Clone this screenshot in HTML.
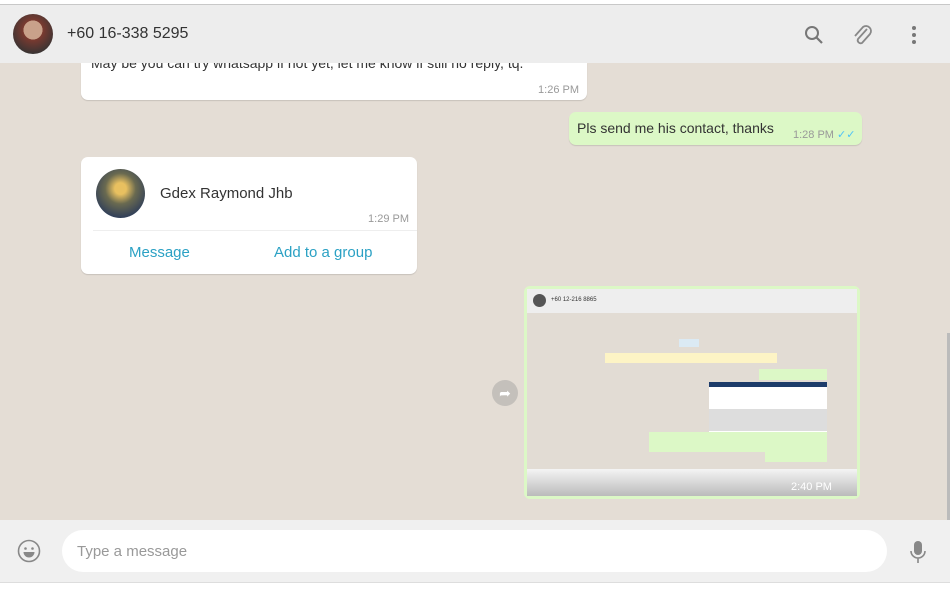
<!DOCTYPE html>
<html><head><style>
*{margin:0;padding:0;box-sizing:border-box}
body{width:950px;height:593px;overflow:hidden;background:#fff;font-family:"Liberation Sans",sans-serif;position:relative}
.chat{position:absolute;left:0;top:63px;width:950px;height:457px;background:#e4ddd5}
.hdr{position:absolute;left:0;top:4px;width:950px;height:59px;background:#ededed;border-top:1px solid #c8c8c8;z-index:2}
.b{position:absolute;background:#fff;border-radius:7px;box-shadow:0 1px 1px rgba(0,0,0,.13);overflow:hidden}
.g{background:#dcf8c6}
.t{position:absolute;font-size:11px;color:#999}
.foot{position:absolute;left:0;top:520px;width:950px;height:62px;background:#f0f0f0}
</style></head><body>
<div class="chat">
 <div style="position:absolute;right:0;top:270px;width:3px;height:190px;background:#bbb"></div>
</div>
<div class="hdr">
 <div style="position:absolute;left:13px;top:9px;width:40px;height:40px;border-radius:50%;background:radial-gradient(circle at 50% 40%,#c9a18a 0 30%,#7a3a30 31%,#333 80%)"></div>
 <div style="position:absolute;left:67px;top:20px;font-size:16px;color:#333">+60 16-338 5295</div>
 <svg style="position:absolute;left:804px;top:20px" width="20" height="20" viewBox="0 0 20 20"><circle cx="8" cy="8" r="6" fill="none" stroke="#777" stroke-width="2"/><line x1="12.5" y1="12.5" x2="18" y2="18" stroke="#777" stroke-width="2.2"/></svg>
 <svg style="position:absolute;left:852px;top:19px" width="22" height="24" viewBox="0 0 22 24"><path d="M15 5 L6 15 a3 3 0 0 0 4 4 L18 10 a5 5 0 0 0 -7 -7 L3 12" fill="none" stroke="#888" stroke-width="1.8"/></svg>
 <div style="position:absolute;left:912px;top:21px;width:4px;height:4px;border-radius:50%;background:#777;box-shadow:0 7px 0 #777,0 14px 0 #777"></div>
</div>
<div class="b" style="left:81px;top:63px;width:506px;height:37px;border-radius:0 0 7px 7px">
 <div style="position:absolute;left:10px;top:-8px;font-size:14px;color:#333">May be you can try whatsapp if not yet, let me know if still no reply, tq.</div>
 <div class="t" style="right:8px;top:21px">1:26 PM</div>
</div>
<div class="b g" style="left:569px;top:112px;width:293px;height:33px">
 <div style="position:absolute;left:8px;top:8px;font-size:14px;color:#333">Pls send me his contact, thanks</div>
 <div class="t" style="left:224px;top:16px">1:28 PM <span style="color:#4fc3f7">✓✓</span></div>
</div>
<div class="b" style="left:81px;top:157px;width:336px;height:117px">
 <div style="position:absolute;left:15px;top:12px;width:49px;height:49px;border-radius:50%;background:radial-gradient(circle at 50% 40%,#e8c060 0 15%,#6a6a50 40%,#2a3a5a 80%)"></div>
 <div style="position:absolute;left:79px;top:28px;font-size:15px;color:#333">Gdex Raymond Jhb</div>
 <div class="t" style="right:8px;top:56px">1:29 PM</div>
 <div style="position:absolute;left:12px;right:0;top:73px;border-top:1px solid #eee"></div>
 <div style="position:absolute;left:48px;top:87px;font-size:15px;color:#2ba1c4">Message</div>
 <div style="position:absolute;left:193px;top:87px;font-size:15px;color:#2ba1c4">Add to a group</div>
</div>
<div style="position:absolute;left:492px;top:380px;width:26px;height:26px;border-radius:50%;background:#c4c0bb;color:#fff;font-size:14px;text-align:center;line-height:26px">➦</div>
<div style="position:absolute;left:524px;top:286px;width:336px;height:213px;background:#dcf8c6;border-radius:6px;padding:3px">
 <div style="position:relative;width:330px;height:207px;background:#e2dcd4;overflow:hidden">
  <div style="position:absolute;left:0;top:0;width:330px;height:24px;background:#eee"></div>
  <div style="position:absolute;left:6px;top:5px;width:13px;height:13px;border-radius:50%;background:#555"></div>
  <div style="position:absolute;left:24px;top:8px;font-size:6px;color:#333">+60 12-216 8865</div>
  <div style="position:absolute;left:152px;top:50px;width:20px;height:8px;background:#dbeaf4"></div>
  <div style="position:absolute;left:78px;top:64px;width:172px;height:10px;background:#fdf4c5"></div>
  <div style="position:absolute;left:232px;top:80px;width:68px;height:11px;background:#dcf8c6"></div>
  <div style="position:absolute;left:182px;top:93px;width:118px;height:50px;background:#fff;border-top:5px solid #1d3c6a"></div>
  <div style="position:absolute;left:182px;top:120px;width:118px;height:22px;background:#ddd"></div>
  <div style="position:absolute;left:122px;top:143px;width:178px;height:20px;background:#dcf8c6"></div>
  <div style="position:absolute;left:238px;top:162px;width:62px;height:11px;background:#dcf8c6"></div>
  <div style="position:absolute;left:0;top:180px;width:330px;height:27px;background:linear-gradient(#f4f4f4,#bbb)"></div>
  <div style="position:absolute;left:264px;top:192px;font-size:11px;color:#fff">2:40 PM</div>
 </div>
</div>
<div class="foot">
 <svg style="position:absolute;left:17px;top:19px" width="24" height="24" viewBox="0 0 24 24"><circle cx="12" cy="12" r="10.5" fill="none" stroke="#888" stroke-width="1.6"/><circle cx="8.5" cy="9.5" r="1.3" fill="#888"/><circle cx="15.5" cy="9.5" r="1.3" fill="#888"/><path d="M6.5 13 h11 a5.5 5.5 0 0 1 -11 0z" fill="#888"/></svg>
 <div style="position:absolute;left:62px;top:10px;width:825px;height:42px;background:#fff;border-radius:21px"></div>
 <div style="position:absolute;left:77px;top:23px;font-size:15px;color:#999">Type a message</div>
 <svg style="position:absolute;left:909px;top:20px" width="18" height="24" viewBox="0 0 18 24"><rect x="5" y="1" width="8" height="14" rx="4" fill="#888"/><path d="M2 11 a7 7 0 0 0 14 0 M9 18 v5" fill="none" stroke="#888" stroke-width="1.6"/></svg>
</div>
<div style="position:absolute;left:0;top:582px;width:950px;height:11px;background:#fff;border-top:1px solid #ddd"></div>
</body></html>
